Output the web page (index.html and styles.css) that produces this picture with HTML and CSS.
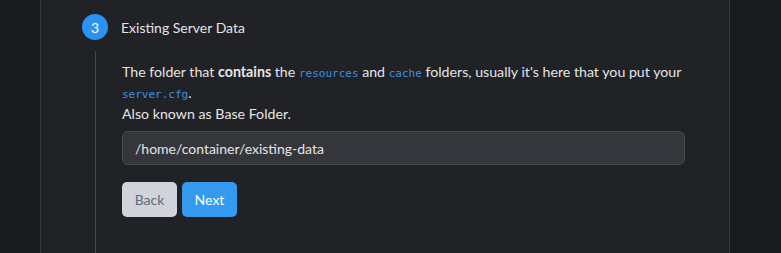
FILE: index.html
```html
<!DOCTYPE html>
<html lang="en">
<head>
    <meta charset="UTF-8">
    <title>Setup - Existing Server Data</title>
    <link rel="stylesheet" href="styles.css">
</head>
<body>
    <div class="panel">
        <div class="step">
            <div class="step-head">
                <span class="step-num">3</span>
                <span class="step-title">Existing Server Data</span>
            </div>
            <div class="step-body">
                <p>The folder that <strong>contains</strong> the <code>resources</code> and <code>cache</code> folders, usually it's here that you put your <code>server.cfg</code>.<br>Also known as Base Folder.</p>
                <input type="text" class="path-input" value="/home/container/existing-data">
                <div class="actions">
                    <button class="btn btn-back">Back</button>
                    <button class="btn btn-next">Next</button>
                </div>
            </div>
        </div>
    </div>
</body>
</html>
```

FILE: styles.css
```css
body {
    margin: 0;
    background: #1a1b1d;
    font-family: 'Lato', 'Noto Sans', sans-serif;
    color: #e4e4e6;
    font-size: 14px;
    height: 253px;
    overflow: hidden;
}

.panel {
    margin-left: 40px;
    width: 688px;
    height: 253px;
    background: #212226;
    border-left: 1px solid #35363a;
    border-right: 1px solid #35363a;
}

.step {
    padding: 14px 0 0 41px;
}

.step-head {
    display: flex;
    align-items: center;
    gap: 13px;
}

.step-num {
    width: 26px;
    height: 26px;
    border-radius: 50%;
    background: #2d92ef;
    color: #fff;
    display: flex;
    align-items: center;
    justify-content: center;
    font-size: 14px;
}

.step-title {
    font-size: 14px;
}

.step-body {
    margin: 11px 0 0 13px;
    border-left: 1px solid #45464a;
    padding: 10px 0 40px 26px;
}

.step-body p {
    margin: 0;
    font-size: 14.2px;
    line-height: 21px;
    width: 570px;
}

code {
    font-family: 'DejaVu Sans Mono', monospace;
    font-size: 11px;
    line-height: 1;
    color: #3d8fe6;
}

.path-input {
    display: block;
    box-sizing: border-box;
    width: 563px;
    height: 34px;
    margin-top: 7px;
    padding: 0 12px;
    background: #35363b;
    border: 1px solid #494a4f;
    border-radius: 6px;
    color: #e4e4e6;
    font-family: inherit;
    font-size: 14px;
}

.actions {
    display: flex;
    gap: 5px;
    margin-top: 17px;
}

.btn {
    width: 55px;
    height: 35px;
    border: none;
    border-radius: 5px;
    font-family: inherit;
    font-size: 14px;
}

.btn-back {
    background: #d0d3da;
    color: #5f6d80;
}

.btn-next {
    background: #339af0;
    color: #fff;
}
```
